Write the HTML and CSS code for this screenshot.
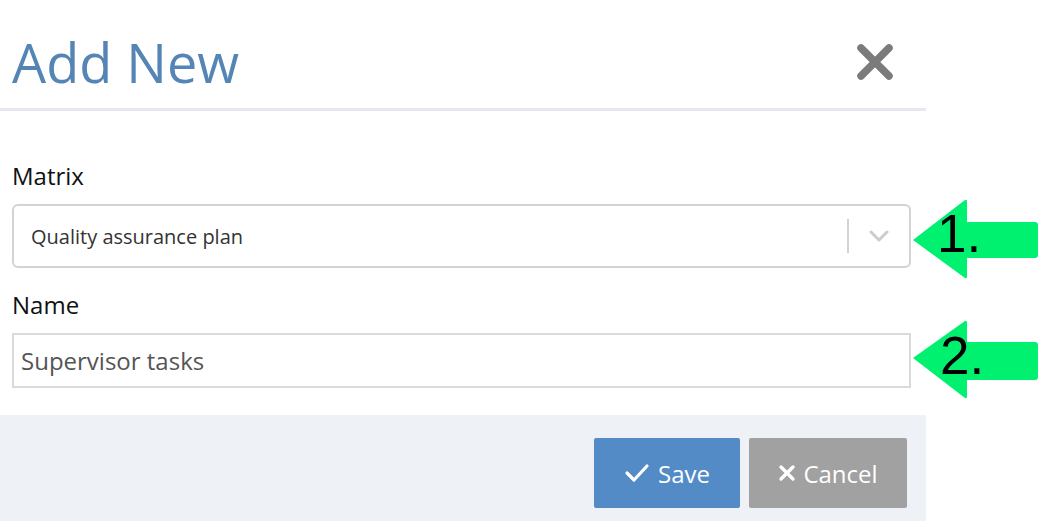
FILE: index.html
```html
<!DOCTYPE html>
<html>
<head>
<meta charset="utf-8">
<link rel="stylesheet" href="styles.css">
</head>
<body>
<div class="page">
  <div class="modal">
    <div class="modal-header">
      <h1 class="title">Add New</h1>
      <button class="close" aria-label="Close">
        <svg width="38" height="38" viewBox="0 0 38 38"><path d="M5 5 L33 33 M33 5 L5 33" stroke="#7b7b7b" stroke-width="7.5" stroke-linecap="round"/></svg>
      </button>
    </div>
    <div class="modal-body">
      <div class="field">
        <label class="label">Matrix</label>
        <div class="select">
          <span class="select-value">Quality assurance plan</span>
          <span class="select-sep"></span>
          <span class="select-arrow">
            <svg width="20" height="12" viewBox="0 0 20 12"><path d="M2 2 L10 10 L18 2" fill="none" stroke="#cccccc" stroke-width="3" stroke-linecap="round" stroke-linejoin="round"/></svg>
          </span>
        </div>
      </div>
      <div class="field">
        <label class="label">Name</label>
        <div class="input">Supervisor tasks</div>
      </div>
    </div>
    <div class="modal-footer">
      <button class="btn btn-save">
        <svg width="26" height="20" viewBox="0 0 26 20"><path d="M3 10 L10 17 L23 3" fill="none" stroke="#fff" stroke-width="3.2" stroke-linecap="round" stroke-linejoin="round"/></svg>
        <span>Save</span>
      </button>
      <button class="btn btn-cancel">
        <svg width="18" height="18" viewBox="0 0 18 18"><path d="M3 3 L15 15 M15 3 L3 15" fill="none" stroke="#fff" stroke-width="3.4" stroke-linecap="round"/></svg>
        <span>Cancel</span>
      </button>
    </div>
  </div>

  <div class="marker marker-1">
    <svg width="128" height="80" viewBox="0 0 128 80"><path d="M1 41 L53 1 Q55 0 55 3 L55 23 L123 23 Q126 23 126 26 L126 56 Q126 59 123 59 L55 59 L55 77 Q55 80 53 79 Z" fill="#00f070"/></svg>
    <span class="marker-num">1.</span>
  </div>
  <div class="marker marker-2">
    <svg width="128" height="80" viewBox="0 0 128 80"><path d="M1 38 L53 1 Q55 0 55 3 L55 22 L123 22 Q126 22 126 25 L126 57 Q126 60 123 60 L55 60 L55 76 Q55 79 53 78 Z" fill="#00f070"/></svg>
    <span class="marker-num">2.</span>
  </div>
</div>
</body>
</html>
```

FILE: styles.css
```css
* { box-sizing: border-box; }
html, body { margin: 0; padding: 0; background: #fff; }
body { font-family: "Open Sans", "Liberation Sans", sans-serif; }

.page { position: relative; width: 1043px; height: 521px; overflow: hidden; }

.modal { width: 926px; display: flex; flex-direction: column; }

.modal-header {
  height: 111px;
  border-bottom: 3px solid #e7e7f1;
  display: flex;
  align-items: flex-start;
  justify-content: space-between;
  padding: 35px 32px 0 12px;
}
.title {
  margin: 0;
  font-weight: 400;
  font-size: 54px;
  line-height: 54px;
  color: #5585b5;
}
.close {
  border: 0; background: none; padding: 0; margin-top: 8px;
  width: 38px; height: 38px; display: block;
}
.close svg { display: block; }

.modal-body {
  padding: 49px 15px 27px 12px;
  display: flex;
  flex-direction: column;
  gap: 21px;
}
.field { display: flex; flex-direction: column; gap: 12px; }
.label { font-size: 24px; color: #111; line-height: 32px; }

.select {
  height: 64px;
  border: 2px solid #d3d3d3;
  border-radius: 6px;
  display: flex;
  align-items: center;
  padding: 0 20px 0 17px;
}
.select-value { flex: 1; font-size: 20px; color: #333; }
.select-sep { width: 2px; height: 34px; background: #d3d3d3; margin-right: 20px; }
.select-arrow svg { display: block; }

.input {
  height: 55px;
  border: 2px solid #dadada;
  padding: 0 7px;
  display: flex;
  align-items: center;
  font-size: 24px;
  color: #555;
}

.modal-footer {
  background: #eef2f7;
  height: 106px;
  display: flex;
  justify-content: flex-end;
  align-items: flex-start;
  gap: 9px;
  padding: 23px 19px 0 0;
}
.btn {
  height: 70px;
  border: 0;
  border-radius: 2px;
  color: #fff;
  font-family: "Open Sans", "Liberation Sans", sans-serif;
  font-size: 24px;
  display: flex;
  align-items: center;
  justify-content: center;
  gap: 8px;
}
.btn svg { display: block; }
.btn-save { width: 146px; background: #528bc6; }
.btn-cancel { width: 158px; background: #a1a1a1; gap: 7px; }

.marker { position: absolute; width: 128px; height: 80px; }
.marker svg { position: absolute; left: 0; top: 0; }
.marker-1 { left: 912px; top: 199px; }
.marker-2 { left: 912px; top: 320px; }
.marker-num {
  position: absolute;
  font-family: "Liberation Sans", sans-serif;
  font-weight: 400;
  font-size: 53px;
  line-height: 53px;
  color: #000;
}
.marker-1 .marker-num { top: 8px; left: 25px; }
.marker-2 .marker-num { top: 9px; left: 28px; }
```
